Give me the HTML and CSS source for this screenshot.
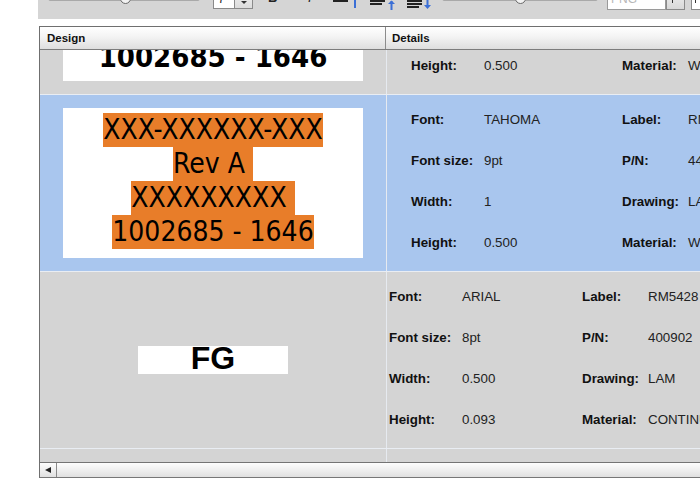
FILE: index.html
```html
<!DOCTYPE html>
<html>
<head>
<meta charset="utf-8">
<title>Label designs</title>
<link rel="stylesheet" href="styles.css">
</head>
<body>
<div class="toolbar">
  <div class="slider s1"><div class="track"></div><div class="thumb t1"></div></div>
  <div class="select"><div class="sel-text">7</div><div class="sel-btn"><span class="tri"></span></div></div>
  <div class="fmt fb">B</div>
  <div class="fmt fi">I</div>
  <svg class="ico i1" width="28" height="10" viewBox="0 0 28 10"><rect x="1" y="0" width="15" height="2" fill="#222"/><rect x="22" y="0" width="2" height="8" fill="#3b6fd6"/></svg>
  <svg class="ico i2" width="28" height="10" viewBox="0 0 28 10"><rect x="1" y="0" width="15" height="2" fill="#222"/><rect x="1" y="3" width="12" height="2" fill="#222"/><rect x="21.5" y="1" width="2" height="9" fill="#3b6fd6"/><path d="M19 4 L22.5 0.5 L26 4 Z" fill="#3b6fd6"/></svg>
  <svg class="ico i3" width="28" height="10" viewBox="0 0 28 10"><rect x="1" y="0" width="15" height="2" fill="#222"/><rect x="1" y="3" width="15" height="2" fill="#222"/><rect x="1" y="6" width="12" height="2" fill="#222"/><rect x="20.5" y="0" width="2" height="6" fill="#3b6fd6"/><path d="M18 5 L21.5 9 L25 5 Z" fill="#3b6fd6"/></svg>
  <div class="slider s2"><div class="track"></div><div class="thumb t2"></div></div>
  <div class="input"><span class="ph">PNG</span></div>
  <div class="ibtn"><span class="mark"></span></div>
  <div class="ibox"><span class="mark"></span></div>
</div>

<div class="grid">
  <div class="head">
    <div class="hcell hc1">Design</div>
    <div class="hcell hc2">Details</div>
  </div>
  <div class="viewport">
    <div class="rows">
      <div class="row gray">
        <div class="design">
          <div class="label bold">
            <div class="ln">XXX-XXXXXX-XXX</div>
            <div class="ln">Rev A</div>
            <div class="ln">XXXXXXXXX</div>
            <div class="ln">1002685 - 1646</div>
          </div>
        </div>
        <div class="details">
          <div class="dgrid wide">
            <span class="k">Font:</span><span class="v">TAHOMA</span><span class="k">Label:</span><span class="v">RM5430</span>
            <span class="k">Font size:</span><span class="v">12pt</span><span class="k">P/N:</span><span class="v">440118</span>
            <span class="k">Width:</span><span class="v">1</span><span class="k">Drawing:</span><span class="v">LAM</span>
            <span class="k">Height:</span><span class="v">0.500</span><span class="k">Material:</span><span class="v">WHITE</span>
          </div>
        </div>
      </div>

      <div class="row blue">
        <div class="design">
          <div class="label">
            <div class="ln"><span class="hl">XXX-XXXXXX-XXX</span></div>
            <div class="ln"><span class="hl">Rev A&nbsp;</span></div>
            <div class="ln"><span class="hl">XXXXXXXXX&nbsp;</span></div>
            <div class="ln"><span class="hl">1002685 - 1646</span></div>
          </div>
        </div>
        <div class="details">
          <div class="dgrid wide">
            <span class="k">Font:</span><span class="v">TAHOMA</span><span class="k">Label:</span><span class="v">RM5431</span>
            <span class="k">Font size:</span><span class="v">9pt</span><span class="k">P/N:</span><span class="v">440119</span>
            <span class="k">Width:</span><span class="v">1</span><span class="k">Drawing:</span><span class="v">LAM</span>
            <span class="k">Height:</span><span class="v">0.500</span><span class="k">Material:</span><span class="v">WHITE</span>
          </div>
        </div>
      </div>

      <div class="row gray">
        <div class="design">
          <div class="fg">FG</div>
        </div>
        <div class="details">
          <div class="dgrid narrow">
            <span class="k">Font:</span><span class="v">ARIAL</span><span class="k">Label:</span><span class="v">RM5428</span>
            <span class="k">Font size:</span><span class="v">8pt</span><span class="k">P/N:</span><span class="v">400902</span>
            <span class="k">Width:</span><span class="v">0.500</span><span class="k">Drawing:</span><span class="v">LAM</span>
            <span class="k">Height:</span><span class="v">0.093</span><span class="k">Material:</span><span class="v">CONTINUOUS</span>
          </div>
        </div>
      </div>

      <div class="row gray">
        <div class="design">
          <div class="fg">WIP</div>
        </div>
        <div class="details">
          <div class="dgrid narrow">
            <span class="k">Font:</span><span class="v">ARIAL</span><span class="k">Label:</span><span class="v">RM5429</span>
            <span class="k">Font size:</span><span class="v">8pt</span><span class="k">P/N:</span><span class="v">400903</span>
            <span class="k">Width:</span><span class="v">0.500</span><span class="k">Drawing:</span><span class="v">LAM</span>
            <span class="k">Height:</span><span class="v">0.093</span><span class="k">Material:</span><span class="v">CONTINUOUS</span>
          </div>
        </div>
      </div>
    </div>
  </div>
  <div class="hscroll">
    <div class="sbtn"><span class="larrow"></span></div>
    <div class="strack"></div>
  </div>
</div>
</body>
</html>
```

FILE: styles.css
```css
html, body {
  margin: 0;
  padding: 0;
  overflow: hidden;
  background: #ffffff;
  width: 700px;
  height: 478px;
}
body {
  font-family: "Liberation Sans", Arial, sans-serif;
  color: #111;
}

/* ---------- toolbar (scrolled, only the bottom is visible) ---------- */
.toolbar {
  margin-left: 38px;
  height: 19px;
  width: 662px;
  background: #d5d5d5;
  display: flex;
  align-items: flex-start;
  overflow: hidden;
}
.slider {
  position: relative;
  height: 12px;
  margin-top: -7px;
  flex: none;
}
.s1 { margin-left: 10px; width: 152px; }
.s2 { margin-left: 8px; width: 156px; }
.track {
  margin-top: 4px;
  height: 2px;
  border: 1px solid #a9a9a9;
  border-radius: 2px;
  background: #f6f6f6;
}
.thumb {
  position: absolute;
  top: 0;
  width: 9px;
  height: 9px;
  border: 1px solid #6a6a6a;
  border-radius: 50%;
  background: #f2f2f2;
}
.t1 { left: 72px; }
.t2 { left: 73px; }

.select {
  flex: none;
  margin-left: 13px;
  margin-top: -12px;
  width: 38px;
  height: 19px;
  border: 1px solid #8a8a8a;
  background: #fff;
  display: flex;
}
.sel-text {
  width: 20px;
  font-size: 12px;
  line-height: 12px;
  padding-left: 4px;
  padding-top: 4px;
  box-sizing: border-box;
  color: #222;
}
.sel-btn {
  flex: 1;
  border-left: 1px solid #8a8a8a;
  background: linear-gradient(#f4f4f4, #dcdcdc);
  display: flex;
  justify-content: center;
  align-items: flex-end;
  padding-bottom: 4px;
  box-sizing: border-box;
}
.tri {
  width: 0;
  height: 0;
  border-left: 3px solid transparent;
  border-right: 3px solid transparent;
  border-top: 3px solid #333;
}
.fmt {
  flex: none;
  font-size: 13px;
  line-height: 12px;
  margin-top: -8px;
  color: #222;
}
.fb { margin-left: 15px; font-weight: bold; width: 12px; }
.fi { margin-left: 28px; font-style: italic; width: 6px; }
.ico { flex: none; display: block; }
.i1 { margin-left: 18px; }
.i2 { margin-left: 9px; }
.i3 { margin-left: 9px; }

.input {
  flex: none;
  margin-left: 9px;
  margin-top: -12px;
  width: 54px;
  height: 16px;
  border: 1px solid #9a9a9a;
  background: #fff;
  font-size: 12px;
  line-height: 12px;
  padding-left: 3px;
  padding-top: 4px;
  box-sizing: content-box;
}
.ph { color: #b8b8b8; }
.ibtn {
  flex: none;
  margin-top: -12px;
  width: 17px;
  height: 20px;
  border: 1px solid #8a8a8a;
  background: linear-gradient(#f2f2f2, #d8d8d8);
  position: relative;
}
.ibox {
  flex: none;
  margin-left: 6px;
  margin-top: -12px;
  width: 40px;
  height: 20px;
  border: 1px solid #8a8a8a;
  background: #fff;
  position: relative;
}
.mark {
  position: absolute;
  bottom: 6px;
  left: 5px;
  width: 1px;
  height: 6px;
  background: #333;
}
.ibox .mark { left: 3px; }

/* ---------- data grid ---------- */
.grid {
  margin-left: 39px;
  margin-top: 7px;
  width: 700px;
  border-left: 1px solid #6f6f6f;
  border-top: 1px solid #6f6f6f;
}
.head {
  display: flex;
  height: 22px;
  background: linear-gradient(#ffffff, #f3f3f3 45%, #dedede);
  border-bottom: 1px solid #7c7c7c;
}
.hcell {
  font-size: 11.5px;
  font-weight: bold;
  line-height: 22px;
  color: #111;
}
.hc1 {
  width: 346px;
  padding-left: 7px;
  box-sizing: border-box;
  border-right: 1px solid #8c8c8c;
}
.hc2 { padding-left: 6px; }

.viewport {
  height: 412px;
  overflow: hidden;
  border-bottom: 1px solid #747474;
  background: #d4d4d4;
}
.rows { margin-top: -132px; }
.row {
  display: flex;
  height: 176px;
  border-bottom: 1px solid #e9edf3;
}
.gray { background: #d4d4d4; }
.blue { background: #a9c6ee; }

.design {
  width: 346px;
  flex: none;
  border-right: 1px solid #e6eaf0;
  display: flex;
  align-items: center;
  justify-content: center;
}
.label {
  width: 300px;
  height: 150px;
  background: #ffffff;
  box-sizing: border-box;
  padding-top: 5px;
  text-align: center;
  font-family: "DejaVu Sans Condensed", "DejaVu Sans", sans-serif;
  font-stretch: semi-condensed;
  font-size: 28px;
  line-height: 34px;
  color: #000;
  white-space: nowrap;
}
.hl {
  display: inline-block;
  background: #e87d29;
  line-height: 34px;
}
.label.bold {
  display: flex;
  flex-direction: column;
  justify-content: flex-end;
  padding-top: 0;
  padding-bottom: 7px;
  font-weight: bold;
  font-size: 29px;
}
.fg {
  width: 150px;
  height: 28px;
  background: #ffffff;
  text-align: center;
  font-family: "Liberation Sans", Arial, sans-serif;
  font-weight: bold;
  font-size: 32px;
  line-height: 24px;
  color: #000;
  overflow: visible;
}

.details {
  flex: 1;
  min-width: 0;
  overflow: hidden;
}
.dgrid {
  display: grid;
  grid-auto-rows: 41px;
  line-height: 41px;
  font-size: 13.33px;
  padding-top: 4px;
  white-space: nowrap;
}
.wide {
  grid-template-columns: 73px 138px 66px 200px;
  padding-left: 24px;
}
.narrow {
  grid-template-columns: 73px 120px 66px 200px;
  padding-left: 2px;
}
.k { font-weight: bold; color: #111; }
.v { color: #222; }

/* ---------- horizontal scrollbar ---------- */
.hscroll {
  display: flex;
  height: 14px;
  border-bottom: 1px solid #777;
  background: linear-gradient(#fdfdfd, #ececec 60%, #e0e0e0);
}
.sbtn {
  width: 16px;
  flex: none;
  border-right: 1px solid #8a8a8a;
  display: flex;
  align-items: center;
  justify-content: center;
}
.larrow {
  width: 0;
  height: 0;
  border-top: 3px solid transparent;
  border-bottom: 3px solid transparent;
  border-right: 6px solid #222;
}
.strack { flex: 1; }
```
